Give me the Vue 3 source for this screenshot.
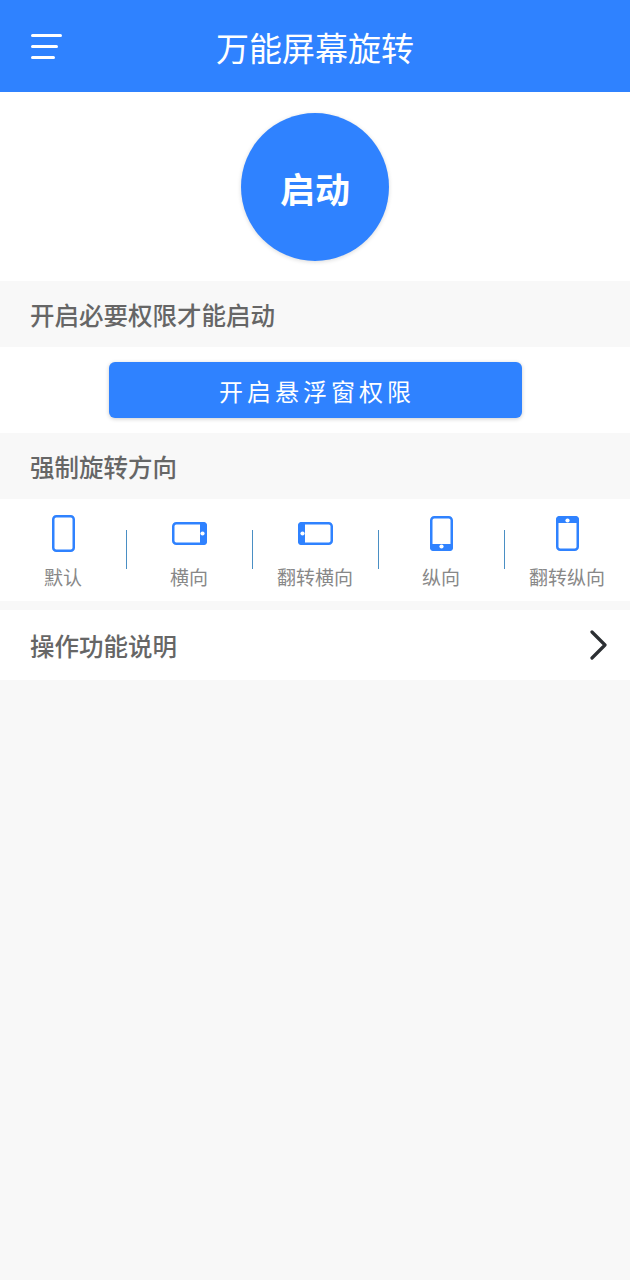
<script setup>
const directions = [
  { label: '默认', w: 23, h: 37, shape: 'default' },
  { label: '横向', w: 35, h: 23, shape: 'right' },
  { label: '翻转横向', w: 35, h: 23, shape: 'left' },
  { label: '纵向', w: 23, h: 35, shape: 'bottom' },
  { label: '翻转纵向', w: 23, h: 35, shape: 'top' }
]
</script>

<template>
  <div class="page">
    <header class="topbar">
      <div class="menu">
        <span class="line l1"></span>
        <span class="line l2"></span>
        <span class="line l3"></span>
      </div>
      <h1 class="title">万能屏幕旋转</h1>
    </header>

    <section class="start-wrap">
      <div class="start">启动</div>
    </section>

    <div class="heading">开启必要权限才能启动</div>
    <section class="perm-wrap">
      <div class="perm-btn">开启悬浮窗权限</div>
    </section>

    <div class="heading">强制旋转方向</div>
    <section class="dirs">
      <div class="dir" v-for="d in directions" :key="d.label">
        <div class="dir-icon">
          <svg :width="d.w" :height="d.h" :viewBox="`0 0 ${d.w} ${d.h}`" fill="none">
            <rect x="1.25" y="1.25" :width="d.w - 2.5" :height="d.h - 2.5" rx="3" stroke="#2f82ff" stroke-width="2.5" />
            <template v-if="d.shape === 'right'">
              <path d="M28 0h3.5a3.5 3.5 0 0 1 3.5 3.5v16a3.5 3.5 0 0 1-3.5 3.5H28z" fill="#2f82ff" />
              <circle cx="30.5" cy="11.5" r="2.1" fill="#fff" />
            </template>
            <template v-if="d.shape === 'left'">
              <path d="M7 0H3.5A3.5 3.5 0 0 0 0 3.5v16A3.5 3.5 0 0 0 3.5 23H7z" fill="#2f82ff" />
              <circle cx="4.5" cy="11.5" r="2.1" fill="#fff" />
            </template>
            <template v-if="d.shape === 'bottom'">
              <path d="M0 28v3.5A3.5 3.5 0 0 0 3.5 35h16a3.5 3.5 0 0 0 3.5-3.5V28z" fill="#2f82ff" />
              <circle cx="11.5" cy="30.5" r="2.1" fill="#fff" />
            </template>
            <template v-if="d.shape === 'top'">
              <path d="M0 7V3.5A3.5 3.5 0 0 1 3.5 0h16A3.5 3.5 0 0 1 23 3.5V7z" fill="#2f82ff" />
              <circle cx="11.5" cy="4.5" r="2.1" fill="#fff" />
            </template>
          </svg>
        </div>
        <div class="dir-label">{{ d.label }}</div>
      </div>
    </section>

    <section class="help">
      <span class="help-text">操作功能说明</span>
      <svg class="chevron" width="18" height="30" viewBox="0 0 18 30" fill="none">
        <path d="M2 2l13 13L2 28" stroke="#2c2f33" stroke-width="3.2" stroke-linecap="round" stroke-linejoin="round" />
      </svg>
    </section>
  </div>
</template>

<style scoped>
.page {
  min-height: 1280px;
  background: #f8f8f8;
  font-family: "Noto Sans CJK SC", "Noto Sans", sans-serif;
}

.topbar {
  height: 92px;
  background: #2f82ff;
  display: flex;
  align-items: center;
  justify-content: center;
  position: relative;
}

.title {
  margin: 0;
  font-size: 33px;
  font-weight: 400;
  line-height: 1;
  color: #fff;
  padding-top: 3px;
}

.menu {
  position: absolute;
  left: 31px;
  top: 34px;
  display: flex;
  flex-direction: column;
  gap: 8px;
}

.line {
  display: block;
  height: 3px;
  background: #fff;
  border-radius: 2px;
}

.l1 { width: 31px; }
.l2 { width: 27px; }
.l3 { width: 24px; }

.start-wrap {
  height: 189px;
  background: #fff;
  padding-top: 21px;
  box-sizing: border-box;
}

.start {
  width: 148px;
  height: 148px;
  margin: 0 auto;
  border-radius: 50%;
  background: #2f82ff;
  box-shadow: 0 1px 4px rgba(0, 0, 0, 0.15);
  color: #fff;
  font-size: 35px;
  font-weight: 700;
  display: flex;
  align-items: center;
  justify-content: center;
  box-sizing: border-box;
}

.heading {
  height: 66px;
  padding-left: 30px;
  display: flex;
  align-items: center;
  font-size: 24.5px;
  font-weight: 500;
  color: #666;
}

.perm-wrap {
  height: 86px;
  background: #fff;
  padding-top: 15px;
  box-sizing: border-box;
}

.perm-btn {
  width: 413px;
  height: 56px;
  margin: 0 auto;
  border-radius: 6px;
  background: #2f82ff;
  box-shadow: 0 1px 4px rgba(0, 0, 0, 0.2);
  color: #fff;
  font-size: 24px;
  letter-spacing: 4px;
  display: flex;
  align-items: center;
  justify-content: center;
  padding-left: 4px;
  box-sizing: border-box;
}

.dirs {
  height: 102px;
  background: #fff;
  display: grid;
  grid-template-columns: repeat(5, 126px);
}

.dir {
  position: relative;
  display: flex;
  flex-direction: column;
  align-items: center;
}

.dir:not(:last-child)::after {
  content: "";
  position: absolute;
  right: -1px;
  top: 31px;
  width: 1px;
  height: 39px;
  background: #4a8fc4;
}

.dir-icon {
  height: 68px;
  display: flex;
  align-items: center;
  justify-content: center;
}

.dir-label {
  font-size: 19px;
  line-height: 22px;
  color: #888;
  margin-top: -1px;
}

.help {
  margin-top: 9px;
  height: 70px;
  background: #fff;
  display: flex;
  align-items: center;
  justify-content: space-between;
  padding: 0 22px 0 30px;
}

.help-text {
  font-size: 24.5px;
  font-weight: 500;
  color: #666;
}
</style>
